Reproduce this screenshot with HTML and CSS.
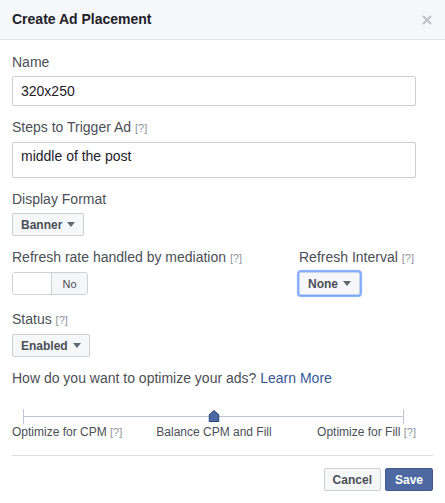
FILE: index.html
```html
<!DOCTYPE html>
<html>
<head>
<meta charset="utf-8">
<link rel="stylesheet" href="styles.css">
</head>
<body>
<div class="dialog">
  <div class="header">
    <span class="title">Create Ad Placement</span>
    <span class="close"><svg width="10" height="10" viewBox="0 0 10 10"><path d="M1 1L9 9M9 1L1 9" stroke="#bec2c9" stroke-width="2.2" fill="none"/></svg></span>
  </div>
  <div class="body">
    <div class="field">
      <div class="label">Name</div>
      <input class="input" type="text" value="320x250">
    </div>
    <div class="field">
      <div class="label">Steps to Trigger Ad <span class="help">[?]</span></div>
      <textarea class="textarea">middle of the post</textarea>
    </div>
    <div class="field">
      <div class="label">Display Format</div>
      <span class="btn">Banner<i class="caret"></i></span>
    </div>
    <div class="field row">
      <div class="col">
        <div class="label">Refresh rate handled by mediation <span class="help">[?]</span></div>
        <div class="toggle"><span class="toggle-on"></span><span class="toggle-off">No</span></div>
      </div>
      <div class="col">
        <div class="label">Refresh Interval <span class="help">[?]</span></div>
        <span class="btn focused">None<i class="caret"></i></span>
      </div>
    </div>
    <div class="field">
      <div class="label">Status <span class="help">[?]</span></div>
      <span class="btn">Enabled<i class="caret"></i></span>
    </div>
    <div class="optimize">
      <div class="label">How do you want to optimize your ads? <a class="link">Learn More</a></div>
      <div class="slider">
        <div class="track">
          <svg class="thumb" width="11" height="12" viewBox="0 0 11 12"><polygon points="0.5,5 5.5,0.5 10.5,5 10.5,11.5 0.5,11.5" fill="#4e69a2" stroke="#29487d" stroke-width="1"/></svg>
        </div>
        <div class="slider-labels">
          <span class="sl-left">Optimize for CPM <span class="help">[?]</span></span>
          <span class="sl-center">Balance CPM and Fill</span>
          <span class="sl-right">Optimize for Fill <span class="help">[?]</span></span>
        </div>
      </div>
    </div>
  </div>
  <div class="footer">
    <span class="btn plain">Cancel</span>
    <span class="btn primary">Save</span>
  </div>
</div>
</body>
</html>
```
FILE: styles.css
```css
* { box-sizing: border-box; }
html, body { margin: 0; padding: 0; background: #fff; }
body { font-family: "Liberation Sans", Arial, sans-serif; color: #4b4f56; }

.dialog { width: 445px; background: #fff; }

.header {
  height: 40px;
  background: #f6f7f9;
  border-bottom: 1px solid #e5e5e5;
  display: flex;
  align-items: center;
  justify-content: space-between;
  padding: 0 12px;
}
.title { font-size: 14px; font-weight: bold; color: #1d2129; line-height: 39px; }
.close { display: flex; width: 10px; height: 10px; margin-right: 1px; margin-top: 1px; }

.body { padding: 13px 12px 0; }

.field { margin-bottom: 12px; }
.label { font-size: 14px; line-height: 18px; margin-bottom: 5px; color: #4b4f56; }
.help { font-size: 11px; color: #90949c; }
.link { color: #365899; text-decoration: none; }

.input, .textarea {
  display: block;
  width: 404px;
  border: 1px solid #ccd0d5;
  border-radius: 2px;
  font-family: "Liberation Sans", Arial, sans-serif;
  font-size: 14px;
  line-height: 18px;
  color: #1d2129;
  padding: 5px 8px;
  margin: 0;
  outline: none;
  background: #fff;
}
.input { height: 30px; }
.textarea { height: 36px; padding: 4px 8px; resize: none; overflow: hidden; }

.btn {
  display: inline-flex;
  align-items: center;
  height: 23px;
  padding: 0 8px;
  border: 1px solid #ced0d4;
  border-radius: 2px;
  background: #f6f7f9;
  font-size: 12px;
  font-weight: bold;
  color: #4b4f56;
  vertical-align: top;
}
.caret {
  display: inline-block;
  width: 0; height: 0;
  margin-left: 5px;
  border-left: 4.5px solid transparent;
  border-right: 4.5px solid transparent;
  border-top: 5px solid #606770;
}
.btn.focused {
  box-shadow: 0 0 1px 2px rgba(88, 144, 255, .75), 0 1px 1px rgba(0, 0, 0, .15);
  border-color: #c6d4ef;
}

.row {
  display: grid;
  grid-template-columns: 1fr 134px;
  margin-bottom: 15px;
}

.toggle {
  display: flex;
  width: 76px;
  height: 23px;
  border: 1px solid #ced0d4;
  border-radius: 3px;
  overflow: hidden;
}
.toggle-on { width: 39px; background: #fff; border-right: 1px solid #ced0d4; }
.toggle-off {
  flex: 1;
  background: #f5f6f7;
  font-size: 11px;
  color: #4b4f56;
  display: flex;
  align-items: center;
  justify-content: center;
}

.optimize { margin-top: 12px; }
.optimize .label { margin-bottom: 0; }
.slider { width: 404px; margin-top: 22px; }
.track {
  position: relative;
  height: 15px;
  margin: 0 12px 0 11px;
  border-left: 1px solid #bdc7d8;
  border-right: 1px solid #bdc7d8;
}
.track::before {
  content: "";
  position: absolute;
  left: 0; right: 0;
  top: 7px;
  height: 1px;
  background: #bdc7d8;
}
.thumb { position: absolute; left: 50%; top: 1px; transform: translateX(-50%); display: block; }

.slider-labels {
  display: grid;
  grid-template-columns: 1fr auto 1fr;
  font-size: 12px;
  line-height: 16px;
  color: #4b4f56;
}
.sl-left { justify-self: start; }
.sl-center { justify-self: center; }
.sl-right { justify-self: end; }

.footer {
  margin: 15px 12px 0;
  border-top: 1px solid #dddfe2;
  padding: 12px 0;
  display: flex;
  justify-content: flex-end;
  gap: 4px;
}
.btn.primary { background: #4e69a2; border-color: #435a8b; color: #fff; padding: 0 9px; }
.btn.plain { background: #f6f7f9; }
```
